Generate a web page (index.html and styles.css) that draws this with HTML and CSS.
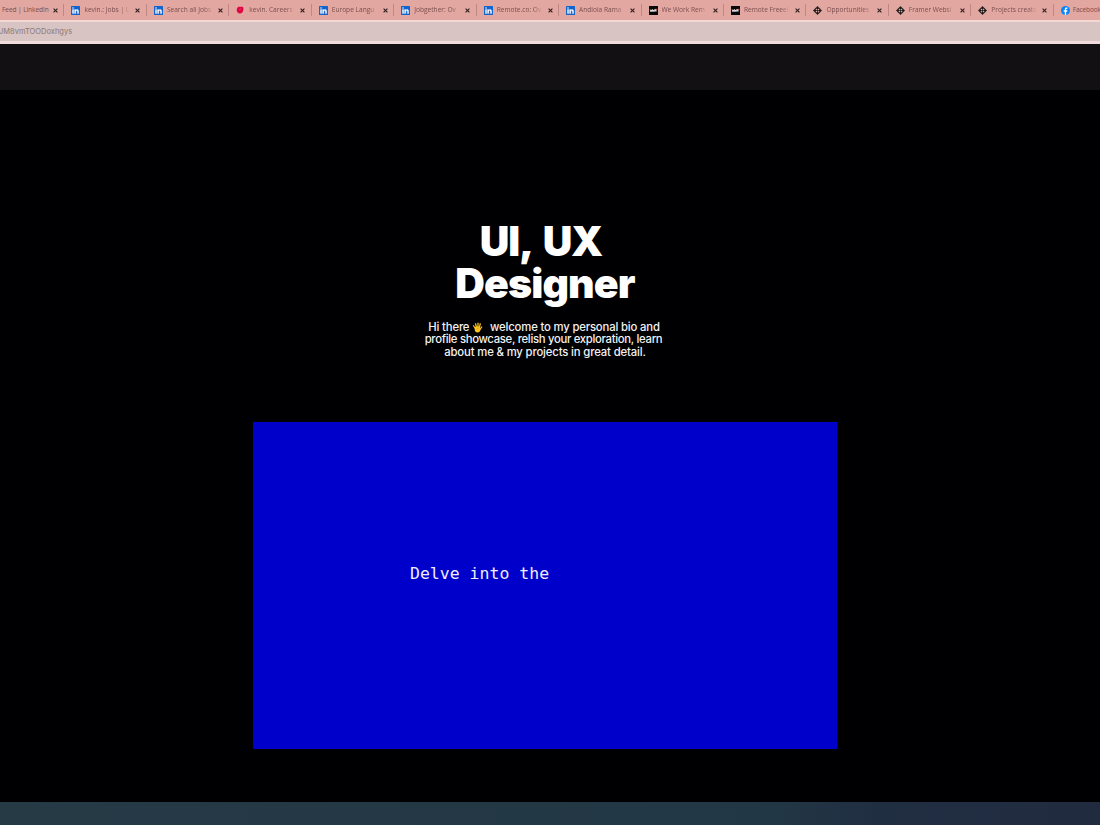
FILE: index.html
```
<!DOCTYPE html>
<html lang="en">
<head>
    <meta charset="UTF-8">
    <meta name="viewport" content="width=device-width, initial-scale=1.0">
    <title>UI, UX Designer</title>
    <link rel="stylesheet" href="styles.css">
</head>
<body>
    <svg class="symbols" aria-hidden="true">
        <symbol id="linkedin" viewBox="0 0 16 16">
            <rect width="16" height="16" rx="1" fill="#1263cc"/>
            <path d="M2.5 6.2h2.2v7.3H2.5zM6.3 6.2h2.1v1c.5-.8 1.3-1.2 2.3-1.2 2 0 2.9 1.2 2.9 3.3v4.2h-2.2V9.7c0-1.1-.4-1.8-1.4-1.8-1.1 0-1.5.8-1.5 1.8v3.8H6.3z" fill="#fff" stroke="#fff" stroke-width=".5"/>
            <circle cx="3.6" cy="3.7" r="1.4" fill="#fff"/>
        </symbol>
        <symbol id="careers" viewBox="0 0 16 16">
            <path d="M5 1.5h8l1.500 1.500c1 5-1 12-6.500 12C4 15 1.500 12 1.500 8c0-3 1.500-5.500 3.500-6.500z" fill="#e00443"/>
            <path d="M7 8l2.500-3" stroke="#ee6485" stroke-width="1.500" fill="none"/>
        </symbol>
        <symbol id="wwr" viewBox="0 0 16 16">
            <rect width="16" height="16" fill="#070707"/>
            <path d="M2 6l1 4 1-3 1 3 1-4 1 4 1-3 1 3 1-4M11 10V6h2v2h-2l2 2" stroke="#fff" stroke-width="1.300" fill="none"/>
            <rect x="13" y="5" width="2" height="2" fill="#e33"/>
        </symbol>
        <symbol id="star" viewBox="0 0 16 16">
            <path d="M8 0l3 3.500-3 2.500-3-2.500zM8 10l3 2.500L8 16l-3-3.500zM3.500 5L6 8l-2.500 3L0 8zM12.500 5L16 8l-3.500 3L10 8z" fill="#1c1a1c"/>
            <path d="M8 6v4M6 8h4M3.500 6l2.500-2.500M10 3.500L12.500 6M3.500 10L6 12.500M10 12.500l2.500-2.500" stroke="#1c1a1c" stroke-width="1.800"/>
        </symbol>
        <symbol id="facebook" viewBox="0 0 16 16">
            <circle cx="8" cy="8" r="8" fill="#0b84f8"/>
            <path d="M6.800 16V10H4.800V7.600h2V6c0-2.200 1.200-3.300 3.100-3.300l1.600.1v2h-1c-1 0-1.300.6-1.300 1.300v1.500h2.200L11 10H9.200v6z" fill="#fff"/>
        </symbol>
        <symbol id="close" viewBox="0 0 6 6">
            <path d="M.7.7l4.600 4.600M5.300.7L.7 5.300" stroke="#2b1d1e" stroke-width="1.300"/>
        </symbol>
    </svg>

    <div class="tab-bar">
        <div class="tab"><svg class="tab-icon"><use href="#linkedin"/></svg><span class="tab-title">Feed | LinkedIn</span><svg class="tab-close"><use href="#close"/></svg></div>
        <div class="tab"><svg class="tab-icon"><use href="#linkedin"/></svg><span class="tab-title">kevin.: Jobs | Li</span><svg class="tab-close"><use href="#close"/></svg></div>
        <div class="tab"><svg class="tab-icon"><use href="#linkedin"/></svg><span class="tab-title">Search all Jobs</span><svg class="tab-close"><use href="#close"/></svg></div>
        <div class="tab"><svg class="tab-icon small"><use href="#careers"/></svg><span class="tab-title">kevin. Careers</span><svg class="tab-close"><use href="#close"/></svg></div>
        <div class="tab"><svg class="tab-icon"><use href="#linkedin"/></svg><span class="tab-title">Europe Langu</span><svg class="tab-close"><use href="#close"/></svg></div>
        <div class="tab"><svg class="tab-icon"><use href="#linkedin"/></svg><span class="tab-title">Jobgether: Ov</span><svg class="tab-close"><use href="#close"/></svg></div>
        <div class="tab"><svg class="tab-icon"><use href="#linkedin"/></svg><span class="tab-title">Remote.co: Ov</span><svg class="tab-close"><use href="#close"/></svg></div>
        <div class="tab"><svg class="tab-icon"><use href="#linkedin"/></svg><span class="tab-title">Andiola Rama</span><svg class="tab-close"><use href="#close"/></svg></div>
        <div class="tab"><svg class="tab-icon"><use href="#wwr"/></svg><span class="tab-title">We Work Rem</span><svg class="tab-close"><use href="#close"/></svg></div>
        <div class="tab"><svg class="tab-icon"><use href="#wwr"/></svg><span class="tab-title">Remote Freeel</span><svg class="tab-close"><use href="#close"/></svg></div>
        <div class="tab"><svg class="tab-icon"><use href="#star"/></svg><span class="tab-title">Opportunities</span><svg class="tab-close"><use href="#close"/></svg></div>
        <div class="tab"><svg class="tab-icon"><use href="#star"/></svg><span class="tab-title">Framer Websi</span><svg class="tab-close"><use href="#close"/></svg></div>
        <div class="tab"><svg class="tab-icon"><use href="#star"/></svg><span class="tab-title">Projects create</span><svg class="tab-close"><use href="#close"/></svg></div>
        <div class="tab"><svg class="tab-icon"><use href="#facebook"/></svg><span class="tab-title">Facebook</span></div>
    </div>
    <div class="address-bar"><span>JM8vmTOODoxhgys</span></div>
    <div class="toolbar"></div>

    <main class="page">
        <h1 class="title">
            <span class="title-top">UI, UX</span>
            <span class="title-bottom">Designer</span>
        </h1>
        <p class="intro">
            <span class="line-one">Hi there
                <svg class="hand" viewBox="0 0 20 22">
                    <path d="M5 12L2 7.500M8 10L6 3.500M11 10V2M14 10.500l1.500-7M15 15l3.500-5" stroke="#fcc21f" stroke-width="2.500" stroke-linecap="round"/>
                    <path d="M4 10.500l3-1.500h8l1 5c0 4-2 7-6 7-3.500 0-5-2-5.500-5z" fill="#fcc21f"/>
                    <path d="M8 15c1-2 3-3 6-3" stroke="#d28b10" fill="none"/>
                </svg>
                welcome to my personal bio and</span>
            <span class="line-two">profile showcase, relish your exploration, learn</span>
            <span class="line-three">about me &amp; my projects in great detail.</span>
        </p>
        <div class="screen">
            <div class="typed">Delve into the</div>
        </div>
    </main>
    <div class="taskbar"></div>
</body>
</html>
```
FILE: styles.css
```
body {
    margin: 0;
    width: 1100px;
    height: 825px;
    display: flex;
    flex-direction: column;
    overflow: hidden;
    background-color: #000002;
    color: white;
    font-family: "Inter", Arial, sans-serif;
}

.symbols {
    display: none;
}

/* Browser tabs */
.tab-bar {
    height: 20px;
    flex: none;
    display: flex;
    margin-left: -18px;
    background-color: #e2a7a0;
    overflow: hidden;
}

.tab {
    flex: none;
    box-sizing: border-box;
    width: 82.45px;
    height: 12px;
    margin-top: 4px;
    padding-left: 7px;
    display: flex;
    align-items: center;
    border-right: 1px solid #bf8884;
}

.tab-icon {
    flex: none;
    width: 9px;
    height: 9px;
}

.tab-icon.small {
    width: 8px;
    height: 8px;
    margin-right: 1px;
}

.tab-title {
    flex: none;
    width: 46px;
    margin: 0 5px 0 4px;
    white-space: nowrap;
    color: #7a4e4f;
    font-family: "Open Sans", sans-serif;
    font-size: 6.6px;
    line-height: 12px;
    -webkit-mask-image: linear-gradient(to right, #000 80%, transparent);
    mask-image: linear-gradient(to right, #000 80%, transparent);
}

.tab:first-child .tab-title,
.tab:last-child .tab-title {
    -webkit-mask-image: none;
    mask-image: none;
}

.tab:first-child .tab-title {
    letter-spacing: -0.1px;
}

.tab:last-child .tab-title {
    margin-left: 3px;
    letter-spacing: -0.15px;
}

.tab-close {
    flex: none;
    width: 5px;
    height: 5px;
}

.address-bar {
    box-sizing: border-box;
    height: 24px;
    flex: none;
    border-top: 2px solid #f4d6d3;
    border-bottom: 3px solid #f0dcdc;
    background-color: #d7c4c3;
    color: #8b7777;
    font-size: 7.5px;
    line-height: 20px;
}

.address-bar span {
    margin-left: -1px;
}

.toolbar {
    height: 46px;
    flex: none;
    background-color: #121012;
}

/* Portfolio page */
.page {
    flex: 1;
    display: flex;
    flex-direction: column;
    align-items: center;
    padding-right: 10px;
}

.title {
    margin: 131px 0 0;
    display: flex;
    flex-direction: column;
    align-items: center;
    font-size: 41px;
    font-weight: 900;
    line-height: 41.5px;
}

.title-top {
    margin-right: 8px;
    letter-spacing: -1.2px;
    word-spacing: 5px;
}

.title-bottom {
    letter-spacing: -0.9px;
}

.intro {
    margin: 17px 0 0;
    display: flex;
    flex-direction: column;
    align-items: center;
    color: #f2f2f2;
    font-size: 11.3px;
    font-weight: 500;
    line-height: 12.3px;
    white-space: nowrap;
    letter-spacing: -0.3px;
}

.line-one {
    margin-right: 2px;
    letter-spacing: -0.16px;
}

.line-two {
    margin-right: 3px;
}

.line-three {
    letter-spacing: -0.14px;
}

.hand {
    width: 11px;
    height: 11px;
    margin-right: 4px;
    vertical-align: -2px;
}

.screen {
    width: 584px;
    height: 327px;
    margin-top: 64px;
    background-color: #0000cb;
}

.typed {
    padding: 142px 0 0 157px;
    font-family: "DejaVu Sans Mono", monospace;
    font-size: 16.5px;
    line-height: 20px;
    color: #eeeeff;
}

.taskbar {
    height: 23px;
    flex: none;
    background: linear-gradient(to right, #263a46, #223745 70%, #202e42 80%, #212b40);
}
```
